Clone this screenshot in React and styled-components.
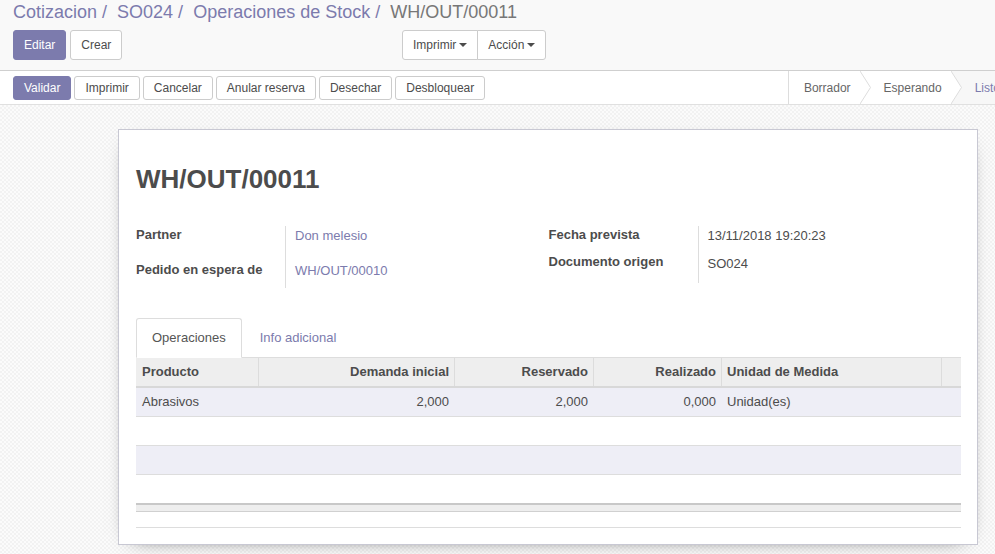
import React from "react";
import styled, { createGlobalStyle, css } from "styled-components";

const PURPLE = "#7C7BAD";

const GlobalStyle = createGlobalStyle`
  html, body {
    margin: 0;
    padding: 0;
  }
  body {
    font-family: "Liberation Sans", Arial, sans-serif;
    font-size: 13px;
    color: #4c4c4c;
    background: #f7f7f7;
    overflow-x: hidden;
  }
  * { box-sizing: border-box; }
`;

const Page = styled.div`
  min-height: 100vh;
  display: flex;
  flex-direction: column;
`;

const ControlPanel = styled.div`
  background: #f9f9f9;
  border-bottom: 1px solid #cfcfcf;
  padding: 0 13px 10px;
`;

const Breadcrumb = styled.ol`
  display: flex;
  margin: 0;
  padding: 0;
  list-style: none;
  font-size: 18px;
  line-height: 24px;
  height: 24px;
`;

const Crumb = styled.li`
  color: ${(p) => (p.$active ? "#777" : PURPLE)};
  white-space: nowrap;
  &:not(:last-child)::after {
    content: "/\\00a0";
    padding: 0 5px;
    color: ${PURPLE};
  }
`;

const CpRow = styled.div`
  display: flex;
  align-items: center;
  margin-top: 6px;
`;

const CpLeft = styled.div`
  display: flex;
  gap: 4px;
  width: 389px;
  flex: none;
`;

const Btn = styled.button`
  font-family: inherit;
  font-size: 12px;
  height: ${(p) => (p.$sm ? "24px" : "30px")};
  line-height: ${(p) => (p.$sm ? "22px" : "28px")};
  padding: 0 10px;
  border: 1px solid #ccc;
  border-radius: 3px;
  background: #fff;
  color: #4c4c4c;
  white-space: nowrap;
  cursor: pointer;
  display: inline-flex;
  align-items: center;
  ${(p) =>
    p.$primary &&
    css`
      background: ${PURPLE};
      border-color: ${PURPLE};
      color: #fff;
    `}
`;

const BtnGroup = styled.div`
  display: flex;
  & > ${Btn}:not(:first-child) {
    margin-left: -1px;
    border-top-left-radius: 0;
    border-bottom-left-radius: 0;
  }
  & > ${Btn}:not(:last-child) {
    border-top-right-radius: 0;
    border-bottom-right-radius: 0;
  }
`;

const Caret = styled.span`
  display: inline-block;
  width: 0;
  height: 0;
  margin-left: 3px;
  border-top: 4px solid #4c4c4c;
  border-left: 4px solid transparent;
  border-right: 4px solid transparent;
`;

const StatusBar = styled.div`
  display: flex;
  justify-content: space-between;
  height: 34px;
  background: #fff;
  border-bottom: 1px solid #e0e0e0;
  padding-left: 13px;
  overflow: hidden;
`;

const StatusButtons = styled.div`
  display: flex;
  align-items: center;
  gap: 3px;
`;

const Steps = styled.div`
  display: flex;
  align-items: stretch;
  border-left: 1px solid #ddd;
  font-size: 12px;
  margin-right: -14px;
  flex: none;
`;

const Step = styled.div`
  display: flex;
  align-items: center;
  padding: 0 9px 0 ${(p) => (p.$first ? "15px" : "13px")};
  color: ${(p) => (p.$current ? PURPLE : "#666")};
  background: ${(p) => (p.$current ? "#f7f7f7" : "#fff")};
  white-space: nowrap;
`;

const Chevron = ({ next }) => (
  <svg width="11" height="33" viewBox="0 0 11 33" style={{ flex: "none" }}>
    <rect x="0" y="0" width="11" height="33" fill={next} />
    <polygon points="0,0 10.5,16.5 0,33" fill="#fff" />
    <polyline points="0,0 10.5,16.5 0,33" fill="none" stroke="#ddd" strokeWidth="1" />
  </svg>
);

const SheetBg = styled.div`
  flex: 1;
  padding: 24px 0 10px 118px;
  background-color: #f7f7f7;
  background-image: repeating-conic-gradient(#f2f2f2 0% 25%, #fbfbfb 0% 50%);
  background-size: 4px 4px;
`;

const Sheet = styled.div`
  width: 860px;
  background: #fff;
  border: 1px solid #c8c8d3;
  box-shadow: 0 5px 20px -15px #000;
  padding: 35px 16px 16px 17px;
`;

const Title = styled.h1`
  margin: 0;
  font-size: 26px;
  line-height: 28.6px;
  font-weight: bold;
  color: #4c4c4c;
`;

const Groups = styled.div`
  display: grid;
  grid-template-columns: 1fr 1fr;
  margin-top: 32.4px;
`;

const Group = styled.div`
  display: grid;
  grid-template-columns: 149px 1fr;
  align-content: start;
`;

const FieldLabel = styled.div`
  font-weight: bold;
  line-height: 18px;
  height: ${(p) => p.$h}px;
  color: #4c4c4c;
`;

const FieldValue = styled.div`
  line-height: 18px;
  height: ${(p) => p.$h}px;
  padding: 1.5px 0 0 9px;
  border-left: 1px solid #ddd;
  color: ${(p) => (p.$link ? PURPLE : "#4c4c4c")};
`;

const Tabs = styled.ul`
  display: flex;
  list-style: none;
  margin: 30px 0 0;
  padding: 0;
  border-bottom: 1px solid #ddd;
`;

const Tab = styled.li`
  padding: 10px 15px;
  line-height: 18px;
  margin: 0 2px -1px 0;
  border: 1px solid transparent;
  border-radius: 3px 3px 0 0;
  color: ${PURPLE};
  ${(p) =>
    p.$active &&
    css`
      border-color: #ddd #ddd transparent;
      background: #fff;
      color: #555;
    `}
`;

const COLS = "122px 196px 139px 128px 220px 20px";

const HeadRow = styled.div`
  display: grid;
  grid-template-columns: ${COLS};
  background: #eee;
  border-bottom: 2px solid #d8d8d8;
  font-weight: bold;
`;

const BodyRow = styled.div`
  display: grid;
  grid-template-columns: ${COLS};
  height: ${(p) => (p.$first ? "28px" : "29px")};
  border-top: ${(p) => (p.$first ? "none" : "1px solid #ddd")};
  background: ${(p) => (p.$odd ? "#eeeef6" : "#fff")};
`;

const Cell = styled.div`
  line-height: 28px;
  height: 28px;
  padding: 0 5px;
  border-left: 1px solid ${(p) => (p.$sep ? "#dcdcdc" : "transparent")};
  text-align: ${(p) => (p.$num ? "right" : "left")};
  white-space: nowrap;
  overflow: hidden;
`;

const Foot = styled.div`
  height: 9px;
  background: #eee;
  border-top: 2px solid #c8c8c8;
  border-bottom: 1px solid #d0d0d0;
`;

const Pager = styled.div`
  margin-top: 15px;
  border-top: 1px solid #ddd;
`;

const columns = [
  { label: "Producto" },
  { label: "Demanda inicial", num: true },
  { label: "Reservado", num: true },
  { label: "Realizado", num: true },
  { label: "Unidad de Medida" },
  { label: "" },
];

const rows = [
  ["Abrasivos", "2,000", "2,000", "0,000", "Unidad(es)", ""],
  null,
  null,
  null,
];

export default function App() {
  return (
    <Page>
      <GlobalStyle />
      <ControlPanel>
        <Breadcrumb>
          <Crumb>Cotizacion</Crumb>
          <Crumb>SO024</Crumb>
          <Crumb>Operaciones de Stock</Crumb>
          <Crumb $active>WH/OUT/00011</Crumb>
        </Breadcrumb>
        <CpRow>
          <CpLeft>
            <Btn $primary>Editar</Btn>
            <Btn>Crear</Btn>
          </CpLeft>
          <BtnGroup>
            <Btn>
              Imprimir<Caret />
            </Btn>
            <Btn>
              Acción<Caret />
            </Btn>
          </BtnGroup>
        </CpRow>
      </ControlPanel>

      <StatusBar>
        <StatusButtons>
          <Btn $sm $primary>Validar</Btn>
          <Btn $sm>Imprimir</Btn>
          <Btn $sm>Cancelar</Btn>
          <Btn $sm>Anular reserva</Btn>
          <Btn $sm>Desechar</Btn>
          <Btn $sm>Desbloquear</Btn>
        </StatusButtons>
        <Steps>
          <Step $first>Borrador</Step>
          <Chevron next="#fff" />
          <Step>Esperando</Step>
          <Chevron next="#f7f7f7" />
          <Step $current>Listo</Step>
        </Steps>
      </StatusBar>

      <SheetBg>
        <Sheet>
          <Title>WH/OUT/00011</Title>
          <Groups>
            <Group>
              <FieldLabel $h={35}>Partner</FieldLabel>
              <FieldValue $h={35} $link>Don melesio</FieldValue>
              <FieldLabel $h={27}>Pedido en espera de</FieldLabel>
              <FieldValue $h={27} $link>WH/OUT/00010</FieldValue>
            </Group>
            <Group>
              <FieldLabel $h={27.5}>Fecha prevista</FieldLabel>
              <FieldValue $h={27.5}>13/11/2018 19:20:23</FieldValue>
              <FieldLabel $h={29.5}>Documento origen</FieldLabel>
              <FieldValue $h={29.5}>SO024</FieldValue>
            </Group>
          </Groups>

          <Tabs>
            <Tab $active>Operaciones</Tab>
            <Tab>Info adicional</Tab>
          </Tabs>

          <HeadRow>
            {columns.map((c, i) => (
              <Cell key={i} $num={c.num} $sep={i > 0}>
                {c.label}
              </Cell>
            ))}
          </HeadRow>
          {rows.map((r, ri) => (
            <BodyRow key={ri} $first={ri === 0} $odd={ri % 2 === 0}>
              {columns.map((c, ci) => (
                <Cell key={ci} $num={c.num}>
                  {r ? r[ci] : ""}
                </Cell>
              ))}
            </BodyRow>
          ))}
          <Foot />
          <Pager />
        </Sheet>
      </SheetBg>
    </Page>
  );
}
